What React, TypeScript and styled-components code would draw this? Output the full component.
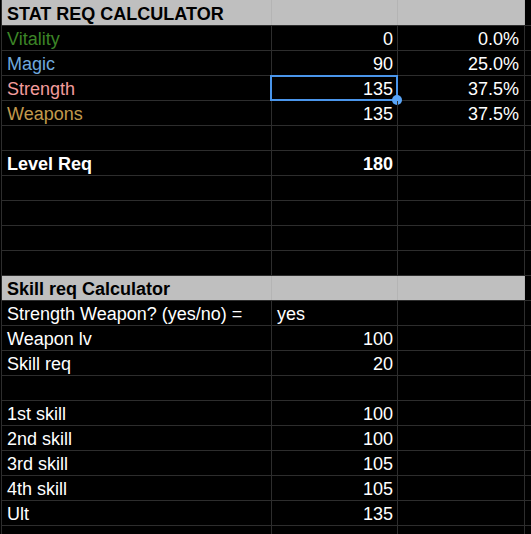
import React from "react";
import styled, { createGlobalStyle } from "styled-components";

const Global = createGlobalStyle`
  html, body { margin: 0; padding: 0; background: #000; }
  body { font-family: "Liberation Sans", Arial, sans-serif; overflow: hidden; }
`;

const Sheet = styled.div`
  width: 531px;
  height: 534px;
  overflow: hidden;
  background: #000;
  padding-left: 1px;
  box-sizing: border-box;
`;

const Row = styled.div<{ $first?: boolean }>`
  display: grid;
  grid-template-columns: 270px 126px 127px 1fr;
  height: ${(p) => (p.$first ? 26 : 25)}px;
  box-sizing: border-box;
  border-left: 1px solid #2d2d2d;
  border-bottom: 1px solid #2d2d2d;
`;

type Tone = "plain" | "green" | "blue" | "pink" | "gold" | "head";

const toneColor: Record<Tone, string> = {
  plain: "#ffffff",
  green: "#3c8527",
  blue: "#6fa8dc",
  pink: "#f29c9c",
  gold: "#c2994c",
  head: "#000000",
};

const Cell = styled.div<{
  $align?: "left" | "right";
  $tone?: Tone;
  $bold?: boolean;
  $gray?: boolean;
  $last?: boolean;
  $padRight?: number;
}>`
  position: relative;
  display: flex;
  align-items: flex-end;
  justify-content: ${(p) => (p.$align === "right" ? "flex-end" : "flex-start")};
  padding: 0 ${(p) => p.$padRight ?? 4}px 1px 5px;
  box-sizing: border-box;
  border-right: ${(p) => (p.$last ? "none" : p.$gray ? "1px solid #b4b4b4" : "1px solid #2d2d2d")};
  background: ${(p) => (p.$gray ? "#bfbfbf" : "transparent")};
  color: ${(p) => toneColor[p.$tone || "plain"]};
  font-size: 18px;
  font-weight: ${(p) => (p.$bold ? 700 : 400)};
  white-space: nowrap;
  line-height: 20px;
`;

const Selection = styled.div`
  position: absolute;
  left: -2px;
  top: -1px;
  right: -1px;
  bottom: -1px;
  border: 2px solid #4a95ea;
  pointer-events: none;
`;

const Handle = styled.div`
  position: absolute;
  right: -6px;
  bottom: -6px;
  width: 10px;
  height: 10px;
  border-radius: 50%;
  background: #5aa5f7;
`;

type RowData = {
  a?: string;
  b?: string;
  c?: string;
  tone?: Tone;
  bold?: boolean;
  header?: boolean;
  bLeft?: boolean;
  selected?: boolean;
};

const rows: RowData[] = [
  { a: "STAT REQ CALCULATOR", header: true, bold: true },
  { a: "Vitality", b: "0", c: "0.0%", tone: "green" },
  { a: "Magic", b: "90", c: "25.0%", tone: "blue" },
  { a: "Strength", b: "135", c: "37.5%", tone: "pink", selected: true },
  { a: "Weapons", b: "135", c: "37.5%", tone: "gold" },
  {},
  { a: "Level Req", b: "180", bold: true },
  {},
  {},
  {},
  {},
  { a: "Skill req Calculator", header: true, bold: true },
  { a: "Strength Weapon? (yes/no) =", b: "yes", bLeft: true },
  { a: "Weapon lv", b: "100" },
  { a: "Skill req", b: "20" },
  {},
  { a: "1st skill", b: "100" },
  { a: "2nd skill", b: "100" },
  { a: "3rd skill", b: "105" },
  { a: "4th skill", b: "105" },
  { a: "Ult", b: "135" },
  {},
];

export default function App() {
  return (
    <>
      <Global />
      <Sheet>
        {rows.map((r, i) => (
          <Row key={i} $first={i === 0}>
            <Cell $gray={r.header} $tone={r.header ? "head" : r.tone} $bold={r.bold}>
              {r.a}
            </Cell>
            <Cell $gray={r.header} $align={r.bLeft ? "left" : "right"} $bold={r.bold && !r.header}>
              {r.b}
              {r.selected && (
                <Selection>
                  <Handle />
                </Selection>
              )}
            </Cell>
            <Cell $gray={r.header} $align="right" $padRight={5}>
              {r.c}
            </Cell>
            <Cell $last />
          </Row>
        ))}
      </Sheet>
    </>
  );
}
